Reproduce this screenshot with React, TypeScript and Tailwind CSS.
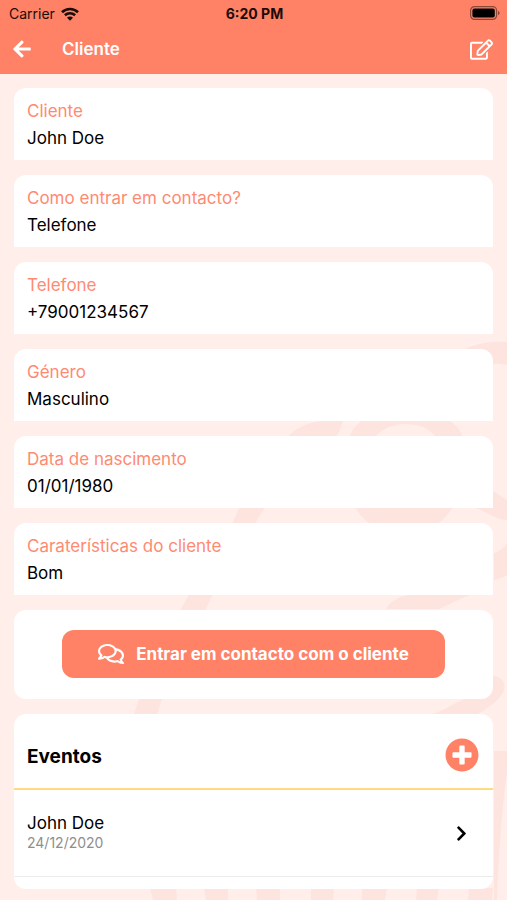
import { FaArrowLeft, FaChevronRight, FaPlusCircle, FaRegComments, FaRegEdit } from "react-icons/fa";

const fields = [
  { label: "Cliente", value: "John Doe" },
  { label: "Como entrar em contacto?", value: "Telefone" },
  { label: "Telefone", value: "+79001234567" },
  { label: "Género", value: "Masculino" },
  { label: "Data de nascimento", value: "01/01/1980" },
  { label: "Caraterísticas do cliente", value: "Bom" },
];

const events = [{ name: "John Doe", date: "24/12/2020" }];

function WifiIcon() {
  return (
    <svg viewBox="0 0 18 14" className="h-[14px] w-[18px]" fill="none" stroke="#1c0c08" aria-hidden="true">
      <path d="M1 5.2a11.6 11.6 0 0 1 16 0" strokeWidth="2.7" />
      <path d="M3.9 8.3a7.4 7.4 0 0 1 10.2 0" strokeWidth="2.6" />
      <path d="M9 13.8 6 10.8a4.2 4.2 0 0 1 6 0z" fill="#1c0c08" stroke="none" />
    </svg>
  );
}

function BatteryIcon() {
  return (
    <svg viewBox="0 0 30 14" className="h-[14px] w-[30px]" aria-hidden="true">
      <rect x="0.6" y="0.6" width="26" height="12.8" rx="4" fill="none" stroke="#000" strokeOpacity="0.45" strokeWidth="1.2" />
      <rect x="2.4" y="2.4" width="22.4" height="9.2" rx="2" fill="#000" />
      <path d="M28 5v4c1-.3 1.6-1.1 1.6-2S29 5.3 28 5z" fill="#000" fillOpacity="0.45" />
    </svg>
  );
}

function StatusBar() {
  return (
    <div className="grid h-7 grid-cols-3 items-center pl-[9px] pr-[7px] text-[#1c0c08]">
      <div className="flex items-center gap-[6px] text-sm">
        Carrier
        <WifiIcon />
      </div>
      <div className="text-center text-sm font-bold">6:20 PM</div>
      <div className="flex justify-end pb-0.5">
        <BatteryIcon />
      </div>
    </div>
  );
}

function Backdrop() {
  return (
    <svg
      viewBox="0 0 507 900"
      preserveAspectRatio="xMidYMid slice"
      className="absolute inset-0 h-full w-full"
      fill="#fee4df"
      aria-hidden="true"
    >
      <path d="M462 350C478 343 492 341 507 342V365C496 362 486 364 470 374Z" />
      <path d="M286 438C300 424 318 418 343 421C340 430 338 436 330 446C295 470 275 490 256 522C235 555 218 580 206 609C185 645 168 680 157 714C145 750 142 780 150 800H128C122 775 124 745 134 714C145 680 160 645 181 609C200 575 215 550 233 522C245 490 265 460 286 438Z" />
      <path
        fillRule="evenodd"
        d="M350 436C358 414 390 405 420 412C445 414 460 426 462 436C474 470 460 505 440 522C415 532 385 532 368 522C345 505 340 465 350 436ZM376 436C385 426 397 424 406 424C418 424 429 428 435 436C445 460 435 490 406 494C378 490 366 462 376 436Z"
      />
      <path d="M470 500C484 508 490 502 494 491C499 495 503 498 507 500V520C495 520 485 510 470 506Z" />
      <path d="M494 553C500 551 504 548 507 543V575C503 578 498 579 494 580Z" />
      <path d="M386 609C390 601 400 596 410 595H470C456 600 448 606 438 609Z" />
      <path d="M494 676C502 677 506 683 504 690C502 697 492 706 478 714H432C450 709 456 699 480 695Z" />
      <path d="M494 751H507V773C502 805 499 850 497 900H494Z" />
      <path d="M150 888h26l1 12h-24zM204 888h24v12h-22zM256 888h24v12h-23zM311 888h23l-1 12h-22zM362 888h25l-2 12h-23zM417 888h22l-2 12h-21zM469 888h24l-1 12h-24z" />
    </svg>
  );
}

export default function App() {
  return (
    <div className="relative min-h-screen bg-[#ffeeea] font-['Inter',sans-serif] text-black">
      <Backdrop />

      <header className="relative bg-[#ff8266]">
        <StatusBar />
        <div className="flex h-[46px] items-center pb-1 pl-3 pr-[14px] text-white">
          <button type="button" aria-label="Voltar">
            <FaArrowLeft size={20} />
          </button>
          <h1 className="ml-[30px] flex-1 pt-0.5 text-[17px] font-semibold">Cliente</h1>
          <button type="button" aria-label="Editar">
            <FaRegEdit size={23} />
          </button>
        </div>
      </header>

      <main className="relative px-[14px] pb-[11px] pt-[14px]">
        <dl className="flex flex-col gap-[15px]">
          {fields.map((field) => (
            <div key={field.label} className="h-[72px] rounded-t-xl bg-white px-[13px] pt-[10px]">
              <dt className="text-[17px] leading-[27px] text-[#ff8a72]">{field.label}</dt>
              <dd className="text-[17px] leading-[27px]">{field.value}</dd>
            </div>
          ))}
        </dl>

        <section className="mt-[15px] flex justify-center rounded-xl bg-white pb-[21px] pt-5">
          <button
            type="button"
            className="flex h-12 w-4/5 items-center justify-center gap-3 rounded-xl bg-[#ff8266] text-[17px] font-bold text-white"
          >
            <FaRegComments size={26} />
            <span className="pt-0.5">Entrar em contacto com o cliente</span>
          </button>
        </section>

        <section className="mt-[15px] rounded-xl bg-white pb-3">
          <div className="flex h-[76px] items-center justify-between border-b-2 border-[#ffdb7d] pl-[13px] pr-[14px] pt-2">
            <h2 className="pt-1 text-[19px] font-bold">Eventos</h2>
            <button type="button" aria-label="Adicionar evento" className="text-[#ff8266]">
              <FaPlusCircle size={34} />
            </button>
          </div>
          <ul>
            {events.map((event) => (
              <li key={event.date} className="border-b border-[#ececec]">
                <button
                  type="button"
                  className="flex h-[86px] w-full items-center justify-between pl-[13px] pr-[23px] text-left"
                >
                  <span className="flex flex-col">
                    <span className="text-[17px] leading-5">{event.name}</span>
                    <span className="text-sm leading-5 text-[#8e8e8e]">{event.date}</span>
                  </span>
                  <FaChevronRight size={17} />
                </button>
              </li>
            ))}
          </ul>
        </section>
      </main>
    </div>
  );
}
